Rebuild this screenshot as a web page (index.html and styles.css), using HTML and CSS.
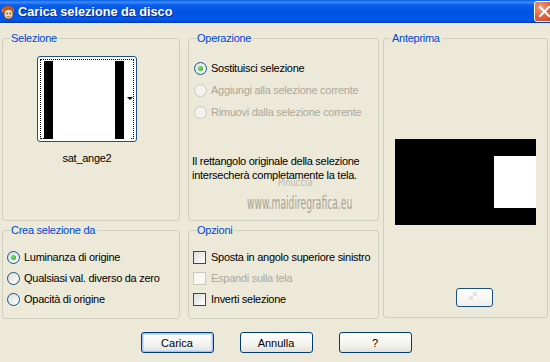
FILE: index.html
```html
<!DOCTYPE html>
<html>
  <head>
    <title>Carica selezione da disco</title>
    <link rel="stylesheet" href="styles.css">
  </head>
  <body>
    <div class="window">
      <div class="titlebar">
        <svg class="app-icon" width="16" height="16" viewBox="0 0 16 16">
          <path d="M2 9 C1 4 5 1 9 2 C13 2 15 5 14 9 L12 8 C11 5 6 5 4 8 Z" fill="#C8561E"/>
          <ellipse cx="8.5" cy="10" rx="4.5" ry="4.8" fill="#F6D8B0" stroke="#8A4A20" stroke-width="0.8"/>
          <circle cx="7" cy="9.5" r="0.8" fill="#333"/>
          <circle cx="10.3" cy="9.5" r="0.8" fill="#333"/>
          <path d="M7 12.3 Q8.6 13.4 10.2 12.3" stroke="#A03020" stroke-width="0.8" fill="none"/>
          <path d="M1 7 L3 4 L4 8 Z" fill="#E0782C"/>
        </svg>
        <span class="title">Carica selezione da disco</span>
        <span class="close">
          <svg width="19" height="19" viewBox="0 0 19 19">
            <path d="M5 5 L14 14 M14 5 L5 14" stroke="#fff" stroke-width="2" stroke-linecap="square"/>
          </svg>
        </span>
      </div>

      <div class="client">
        <div class="groups">
          <div class="group g-sel">
            <span class="legend">Selezione</span>
            <div class="thumb">
              <div class="focus">
                <div class="thumb-img"></div>
              </div>
              <span class="thumb-arrow"></span>
            </div>
            <div class="thumb-name">sat_ange2</div>
          </div>

          <div class="group g-op">
            <span class="legend">Operazione</span>
            <div class="options">
              <div class="opt"><span class="radio checked"></span>Sostituisci selezione</div>
              <div class="opt disabled"><span class="radio"></span>Aggiungi alla selezione corrente</div>
              <div class="opt disabled"><span class="radio"></span>Rimuovi dalla selezione corrente</div>
            </div>
            <p class="info">Il rettangolo originale della selezione<br>intersecherà completamente la tela.</p>
            <div class="watermark">
              <span class="wm-name">Pinuccia</span>
              <span class="wm-site">www.maidiregrafica.eu</span>
            </div>
          </div>

          <div class="group g-prev">
            <span class="legend">Anteprima</span>
            <div class="canvas">
              <div class="canvas-sel"></div>
            </div>
            <div class="zoom-btn"></div>
          </div>

          <div class="group g-crea">
            <span class="legend">Crea selezione da</span>
            <div class="options">
              <div class="opt"><span class="radio checked"></span>Luminanza di origine</div>
              <div class="opt"><span class="radio"></span>Qualsiasi val. diverso da zero</div>
              <div class="opt"><span class="radio"></span>Opacità di origine</div>
            </div>
          </div>

          <div class="group g-opz">
            <span class="legend">Opzioni</span>
            <div class="options">
              <div class="opt check"><span class="box"></span>Sposta in angolo superiore sinistro</div>
              <div class="opt check disabled"><span class="box"></span>Espandi sulla tela</div>
              <div class="opt check"><span class="box"></span>Inverti selezione</div>
            </div>
          </div>
        </div>

        <div class="buttons">
          <div class="btn default">Carica</div>
          <div class="btn">Annulla</div>
          <div class="btn">?</div>
        </div>
      </div>
    </div>
  </body>
</html>
```

FILE: styles.css
```css
body {
  margin: 0;
  font-family: "Liberation Sans", Arial, sans-serif;
  font-size: 11px;
  letter-spacing: -0.27px;
  color: #000;
}
.window {
  width: 550px;
  height: 362px;
  overflow: hidden;
  background: #ECE9D8;
}

/* title bar */
.titlebar {
  height: 23px;
  display: flex;
  align-items: center;
  background: linear-gradient(to bottom, #0A5FE8 0%, #3B8CF8 10%, #0A5EEA 22%, #0054E3 50%, #0058EC 85%, #0047CC 95%, #003AB0 100%);
  color: #fff;
}
.app-icon {
  margin-left: 0;
  margin-top: 1px;
}
.title {
  margin-left: 2px;
  font-weight: bold;
  font-size: 12.7px;
  letter-spacing: 0;
  text-shadow: 1px 1px 0 #0A2C8A;
}
.close {
  margin-left: auto;
  margin-right: -5px;
  margin-top: -1px;
  width: 19px;
  height: 19px;
  border: 1px solid #fff;
  border-radius: 3px;
  background: radial-gradient(circle at 30% 30%, #F4A487 0%, #E5633C 45%, #C8421D 100%);
}
.close svg {
  display: block;
}

/* client */
.client {
  padding: 15px 0 0 2px;
}
.groups {
  display: grid;
  grid-template-columns: 178px 8px 191px 4px 165px;
  grid-template-rows: 183px 89px;
  row-gap: 9px;
}
.group {
  position: relative;
  border: 1px solid #D0D0BF;
  border-radius: 3px;
  box-sizing: border-box;
}
.legend {
  position: absolute;
  top: -7px;
  left: 7px;
  padding: 0 2px 0 1px;
  background: #ECE9D8;
  color: #0046D5;
  line-height: 13px;
}
.g-sel { grid-column: 1; grid-row: 1; }
.g-op { grid-column: 3; grid-row: 1; }
.g-prev { grid-column: 5; grid-row: 1 / span 2; height: 280px; }
.g-crea { grid-column: 1; grid-row: 2; }
.g-opz { grid-column: 3; grid-row: 2; }

/* selection thumbnail */
.g-sel {
  display: flex;
  flex-direction: column;
  padding-left: 34px;
  padding-top: 17px;
}
.thumb {
  position: relative;
  width: 100px;
  height: 86px;
  box-sizing: border-box;
  border: 1px solid #1C5180;
  border-radius: 3px;
  background: #fff;
  padding: 2px;
}
.focus {
  height: 100%;
  box-sizing: border-box;
  border: 1px dotted #000;
  padding: 1px 0 0 3px;
}
.thumb-img {
  width: 86px;
  height: 78px;
  background: linear-gradient(to right, #000 0, #000 9px, #fff 9px, #fff 71px, #000 71px, #000 80px, #fff 80px);
}
.thumb-arrow {
  position: absolute;
  right: 3px;
  top: 40px;
  border-left: 3px solid transparent;
  border-right: 3px solid transparent;
  border-top: 3px solid #000;
}
.thumb-name {
  width: 100px;
  text-align: center;
  margin-top: 10px;
  line-height: 13px;
}

/* options */
.options {
  display: flex;
  flex-direction: column;
}
.opt {
  display: flex;
  align-items: center;
  gap: 4px;
  height: 20px;
}
.opt.disabled {
  color: #ACA899;
}
.radio {
  width: 13px;
  height: 13px;
  box-sizing: border-box;
  border-radius: 50%;
  border: 1px solid #1C5180;
  background: linear-gradient(135deg, #DCDCD7, #FFFFFF);
  display: flex;
  align-items: center;
  justify-content: center;
}
.radio.checked::after {
  content: "";
  width: 5px;
  height: 5px;
  border-radius: 50%;
  background: radial-gradient(circle at 35% 35%, #6CEB6C, #21A121);
}
.disabled .radio {
  border-color: #CAC8BB;
  background: #F3F2EC;
}
.check {
  gap: 5px;
}
.box {
  width: 13px;
  height: 13px;
  box-sizing: border-box;
  border: 1px solid #1C5180;
  background: linear-gradient(135deg, #DCDCD7, #FFFFFF);
}
.disabled .box {
  border-color: #CAC8BB;
  background: #F8F7F2;
}

.g-op {
  padding: 19px 0 0 5px;
}
.g-op .options {
  gap: 2px;
}
.info {
  margin: 32px 0 0 -2px;
  line-height: 14px;
}
.watermark {
  position: absolute;
  left: 58px;
  top: 138px;
  display: flex;
  flex-direction: column;
  align-items: flex-start;
  font-family: "DejaVu Sans Condensed", "Liberation Sans Narrow", sans-serif;
  letter-spacing: 0;
}
.wm-name {
  font-size: 11px;
  line-height: 11px;
  margin-left: 31px;
  color: #BDB9AB;
  transform: scaleX(0.85);
  transform-origin: left;
}
.wm-site {
  font-size: 17px;
  line-height: 17px;
  margin-top: 7px;
  color: #A8A496;
  transform: scaleX(0.6);
  transform-origin: left;
}

.g-crea {
  padding: 16px 0 0 4px;
}
.g-crea .options {
  gap: 1px;
}
.g-opz {
  padding: 16px 0 0 4px;
}
.g-opz .options {
  gap: 1px;
}

/* preview */
.g-prev {
  padding: 100px 0 0 11px;
}
.canvas {
  width: 141px;
  height: 86px;
  background: #000;
  display: flex;
  justify-content: flex-end;
  padding-top: 17px;
  box-sizing: border-box;
}
.canvas-sel {
  width: 42px;
  height: 52px;
  background: #fff;
}
.zoom-btn {
  margin: 63px 0 0 61px;
  width: 37px;
  height: 19px;
  box-sizing: border-box;
  border: 1px solid #1C5180;
  border-radius: 3px;
  background:
    conic-gradient(#E4E3DD 25%, #F8F8F6 0 50%, #E4E3DD 0 75%, #F8F8F6 0) 12px 3px / 8px 8px no-repeat,
    linear-gradient(#FFFFFF, #F0EFEA);
}

/* buttons */
.buttons {
  display: flex;
  justify-content: center;
  gap: 26px;
  margin-top: 13px;
}
.btn {
  width: 73px;
  height: 21px;
  box-sizing: border-box;
  border: 1px solid #003C74;
  border-radius: 3px;
  background: linear-gradient(#FFFFFF 0%, #F4F3EE 60%, #E3E1D8 100%);
  display: flex;
  align-items: center;
  justify-content: center;
  letter-spacing: 0;
}
.btn.default {
  box-shadow: inset 0 0 0 1px #A6C4F5, inset 0 0 0 2px #CDDDF8;
}
```
